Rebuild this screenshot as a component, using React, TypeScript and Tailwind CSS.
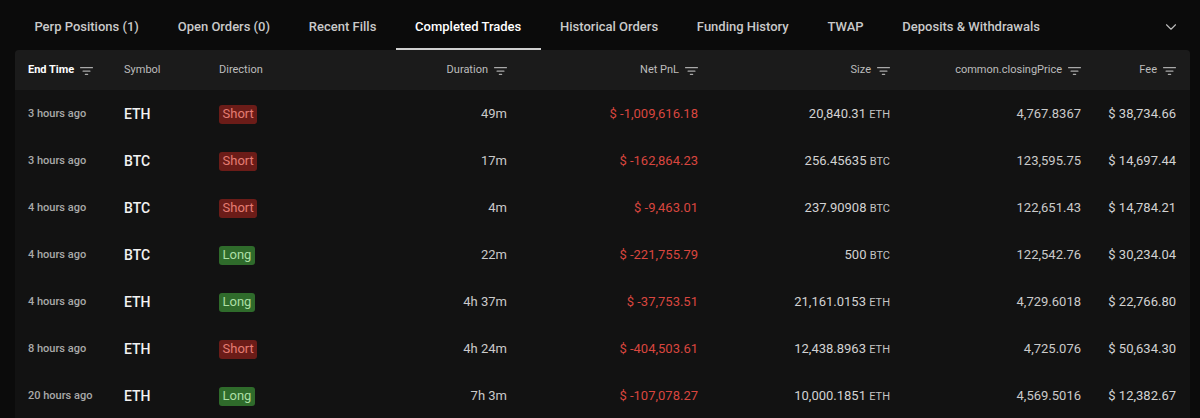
import { ChevronDown } from "lucide-react";

type Trade = {
  time: string;
  symbol: string;
  side: "Short" | "Long";
  duration: string;
  pnl: string;
  size: string;
  price: string;
  fee: string;
};

const tabs = [
  "Perp Positions (1)",
  "Open Orders (0)",
  "Recent Fills",
  "Completed Trades",
  "Historical Orders",
  "Funding History",
  "TWAP",
  "Deposits & Withdrawals",
];

const trades: Trade[] = [
  { time: "3 hours ago", symbol: "ETH", side: "Short", duration: "49m", pnl: "$ -1,009,616.18", size: "20,840.31", price: "4,767.8367", fee: "$ 38,734.66" },
  { time: "3 hours ago", symbol: "BTC", side: "Short", duration: "17m", pnl: "$ -162,864.23", size: "256.45635", price: "123,595.75", fee: "$ 14,697.44" },
  { time: "4 hours ago", symbol: "BTC", side: "Short", duration: "4m", pnl: "$ -9,463.01", size: "237.90908", price: "122,651.43", fee: "$ 14,784.21" },
  { time: "4 hours ago", symbol: "BTC", side: "Long", duration: "22m", pnl: "$ -221,755.79", size: "500", price: "122,542.76", fee: "$ 30,234.04" },
  { time: "4 hours ago", symbol: "ETH", side: "Long", duration: "4h 37m", pnl: "$ -37,753.51", size: "21,161.0153", price: "4,729.6018", fee: "$ 22,766.80" },
  { time: "8 hours ago", symbol: "ETH", side: "Short", duration: "4h 24m", pnl: "$ -404,503.61", size: "12,438.8963", price: "4,725.076", fee: "$ 50,634.30" },
  { time: "20 hours ago", symbol: "ETH", side: "Long", duration: "7h 3m", pnl: "$ -107,078.27", size: "10,000.1851", price: "4,569.5016", fee: "$ 12,382.67" },
];

const cols = "grid grid-cols-[96px_95px_140px_148px_191px_192px_191px_95px]";

function FilterIcon() {
  return (
    <svg width="13" height="10" viewBox="0 0 13 10" className="ml-[6px] text-[#a9a9a9]" fill="currentColor">
      <rect x="0" y="1" width="13" height="1.3" rx="0.5" />
      <rect x="2.5" y="4.4" width="8" height="1.3" rx="0.5" />
      <rect x="4.8" y="7.8" width="3.4" height="1.3" rx="0.5" />
    </svg>
  );
}

function HeadCell({ label, right, active }: { label: string; right?: boolean; active?: boolean }) {
  return (
    <div className={`flex items-center ${right ? "justify-end" : ""}`}>
      <span className={active ? "font-bold text-white" : "text-[#bdbdbd]"}>{label}</span>
      {(right || active) && <FilterIcon />}
    </div>
  );
}

function SideBadge({ side }: { side: Trade["side"] }) {
  const cls =
    side === "Short"
      ? "bg-[#6b1c18] text-[#e57d73]"
      : "bg-[#2f6b2b] text-[#acdfa4]";
  return (
    <span className={`inline-flex h-[19px] items-center rounded-[3px] px-[3.5px] text-[13px] ${cls}`}>
      {side}
    </span>
  );
}

export default function App() {
  return (
    <div className="h-[418px] w-[1200px] overflow-hidden bg-[#0b0b0b] font-['Roboto',sans-serif]">
      {/* Tabs */}
      <div className="flex h-[50px] items-stretch pl-[15px] pr-[20px]">
        {tabs.map((t) => {
          const active = t === "Completed Trades";
          return (
            <div
              key={t}
              className={`relative flex items-center px-[19.4px] pt-[4px] text-[13px] font-medium ${active ? "text-white" : "text-[#c9c9c9]"}`}
            >
              {t}
              {active && <div className="absolute bottom-0 left-0 right-0 h-[2px] bg-[#cfcfcf]" />}
            </div>
          );
        })}
        <div className="ml-auto flex items-center pt-[4px]">
          <ChevronDown size={18} strokeWidth={1.5} className="text-[#bdbdbd]" />
        </div>
      </div>

      {/* Table */}
      <div className="mx-[15px] mr-[10px] overflow-hidden rounded-t-[4px] bg-[#121212]">
        <div className={`${cols} h-[40px] items-center bg-[#1b1b1b] pl-[13px] pt-[1px] text-[11px]`}>
          <HeadCell label="End Time" active />
          <HeadCell label="Symbol" />
          <HeadCell label="Direction" />
          <HeadCell label="Duration" right />
          <HeadCell label="Net PnL" right />
          <HeadCell label="Size" right />
          <HeadCell label="common.closingPrice" right />
          <HeadCell label="Fee" right />
        </div>
        {trades.map((r, i) => (
          <div key={i} className={`${cols} h-[47px] items-center pl-[13px] pt-[1px] text-[13px]`}>
            <div className="text-[11px] font-medium text-[#a9a9a9]">{r.time}</div>
            <div className="text-[14px] font-medium text-[#f2f2f2]">{r.symbol}</div>
            <div>
              <SideBadge side={r.side} />
            </div>
            <div className="text-right text-[#cacaca]">{r.duration}</div>
            <div className="text-right text-[#d9463f]">{r.pnl}</div>
            <div className="text-right text-[#d2d2d2]">
              {r.size} <span className="text-[11px] text-[#c4c4c4]">{r.symbol}</span>
            </div>
            <div className="text-right text-[#cacaca]">{r.price}</div>
            <div className="text-right text-[#d2d2d2]">{r.fee}</div>
          </div>
        ))}
      </div>
    </div>
  );
}
